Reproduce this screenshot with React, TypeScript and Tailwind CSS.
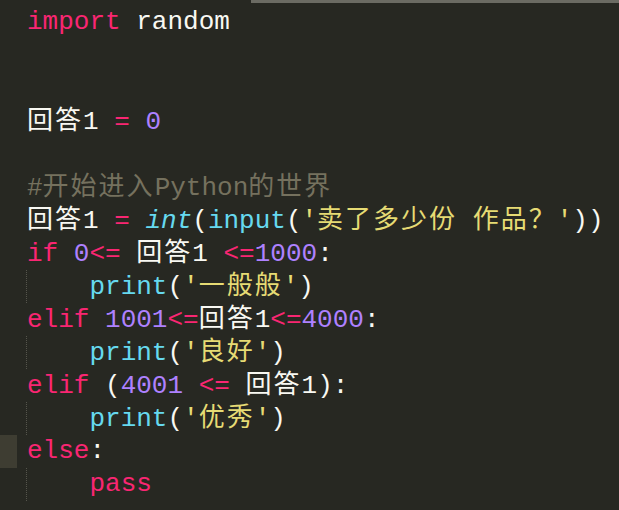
type Tok = [string, string]

const K = 'text-[#f92672]'
const W = 'text-[#f8f8f2]'
const N = 'text-[#ae81ff]'
const S = 'text-[#e6db74]'
const F = 'text-[#66d9ef]'
const C = 'text-[#75715e]'

// 每行：是否缩进 + token 列表
const lines: { indent?: boolean; toks: Tok[] }[] = [
  { toks: [['import', K], [' random', W]] },
  { toks: [] },
  { toks: [] },
  { toks: [['回答', W], ['1 ', W], ['=', K], [' ', W], ['0', N]] },
  { toks: [] },
  { toks: [['#', C], ['开始进入', C], ['Python', C], ['的世界', C]] },
  {
    toks: [
      ['回答', W], ['1 ', W], ['=', K], [' ', W], ['int', F + ' italic'], ['(', W], ['input', F], ['(', W],
      ["'", S], ['卖了多少份', S], [' ', S], ['作品？', S], ["'", S], ['))', W],
    ],
  },
  { toks: [['if', K], [' ', W], ['0', N], ['<=', K], [' ', W], ['回答', W], ['1 ', W], ['<=', K], ['1000', N], [':', W]] },
  { indent: true, toks: [['print', F], ['(', W], ["'", S], ['一般般', S], ["'", S], [')', W]] },
  { toks: [['elif', K], [' ', W], ['1001', N], ['<=', K], ['回答', W], ['1', W], ['<=', K], ['4000', N], [':', W]] },
  { indent: true, toks: [['print', F], ['(', W], ["'", S], ['良好', S], ["'", S], [')', W]] },
  { toks: [['elif', K], [' ', W], ['(', W], ['4001', N], [' ', W], ['<=', K], [' ', W], ['回答', W], ['1', W], [')', W], [':', W]] },
  { indent: true, toks: [['print', F], ['(', W], ["'", S], ['优秀', S], ["'", S], [')', W]] },
  { toks: [['else', K], [':', W]] },
  { indent: true, toks: [['pass', K]] },
]

const isCJK = (s: string) => /[\u3000-\u9fff\uff00-\uffef]/.test(s)

export default function App() {
  return (
    <div className="relative w-[619px] h-[510px] overflow-hidden bg-[#272822]">
      {/* 顶部滚动条 */}
      <div className="absolute left-[251px] top-0 h-[3px] w-[368px] bg-[#6b6b63]" />

      <div
        className="pt-[6px] text-[26px] leading-[33px] whitespace-pre"
        style={{ fontFamily: '"Liberation Mono", "Noto Sans CJK SC", monospace' }}
      >
        {lines.map((line, i) => (
          <div key={i} className="relative h-[33px]">
            {i === 13 && <div className="absolute left-0 top-0 w-[17px] h-[33px] bg-[#3e3d32]" />}
            {line.indent && (
              <div className="absolute left-[26px] top-0 h-[33px] border-l border-dotted border-[#55554c]" />
            )}
            <div className="pl-[27px] h-[33px]">
              {line.indent && <span>{'    '}</span>}
              {line.toks.map(([t, c], j) =>
                isCJK(t) ? (
                  <span
                    key={j}
                    className={c + ' tracking-[2px] leading-none'}
                    style={{ fontFamily: '"Noto Sans CJK SC", sans-serif' }}
                  >
                    {t}
                  </span>
                ) : (
                  <span key={j} className={c}>
                    {t}
                  </span>
                )
              )}
            </div>
          </div>
        ))}
      </div>
    </div>
  )
}
